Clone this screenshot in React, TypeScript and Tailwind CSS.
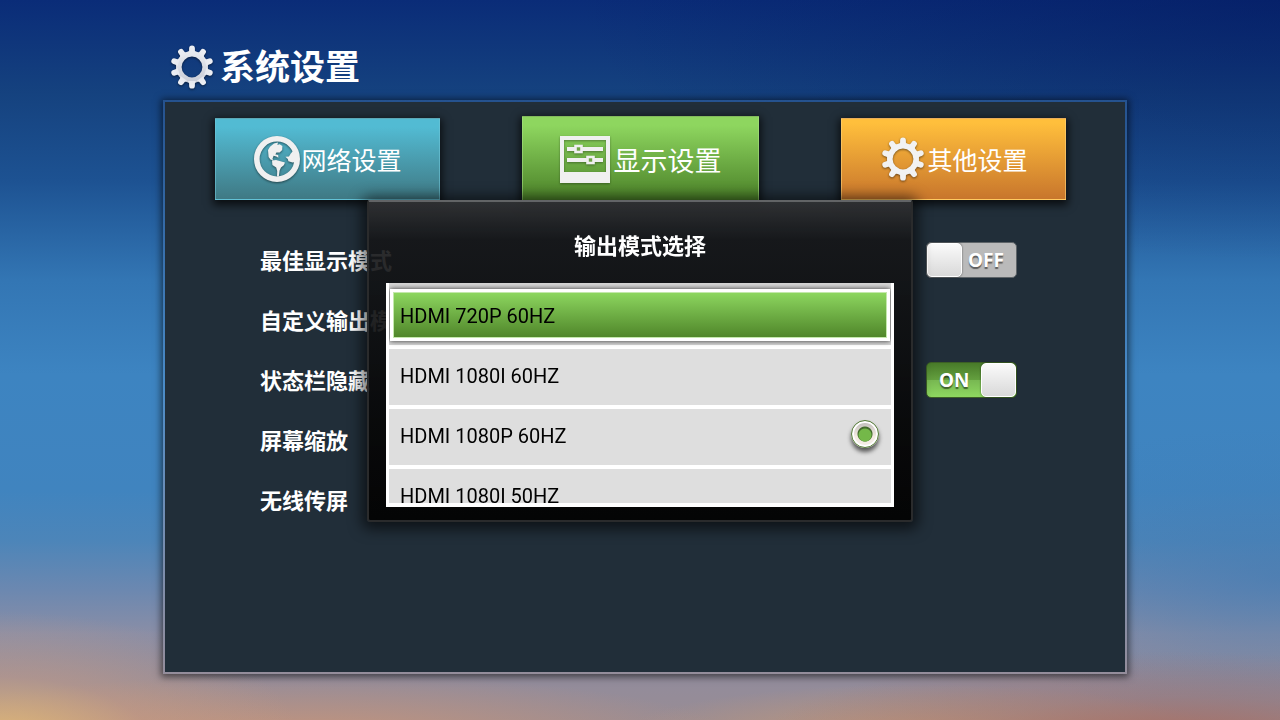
import { useState } from 'react'

interface Modo {
  id: string
  label: string
}

const MODES: Modo[] = [
  { id: '1080i60', label: 'HDMI 1080I 60HZ' },
  { id: '1080p60', label: 'HDMI 1080P 60HZ' },
  { id: '1080i50', label: 'HDMI 1080I 50HZ' },
]

const TEETH = [0, 36, 72, 108, 144, 180, 216, 252, 288, 324]

function GearIcon({ fill }: { fill: string }) {
  return (
    <svg viewBox="0 0 44 44" className="w-11 h-11 shrink-0 drop-shadow-[0_1px_1px_rgba(0,0,0,0.5)]" aria-hidden="true">
      <defs>
        <linearGradient id="gearSilver" gradientUnits="userSpaceOnUse" x1="0" y1="0" x2="0" y2="44">
          <stop offset="0" stopColor="#eef0f5" />
          <stop offset="1" stopColor="#c3c7d2" />
        </linearGradient>
      </defs>
      <circle cx="22" cy="22" r="13.2" fill="none" stroke={fill} strokeWidth="5.6" />
      {TEETH.map((a) => (
        <path key={a} d="M18 8 L19.1 5.6 V3.3 A2.9 2.9 0 0 1 24.9 3.3 V5.6 L26 8 Z" fill={fill} transform={`rotate(${a} 22 22)`} />
      ))}
    </svg>
  )
}

function GlobeIcon() {
  return (
    <svg viewBox="0 0 48 48" className="w-12 h-12 shrink-0 drop-shadow-[0_1px_1px_rgba(0,0,0,0.5)]" fill="#f0f0f0" aria-hidden="true">
      <circle cx="24" cy="24" r="20.2" fill="none" stroke="#f0f0f0" strokeWidth="5.6" />
      <path d="M15 15 L17 11.7 L21 8.6 L25 7.6 L24.4 10 L26.6 9.2 L29.4 11 L29.2 15 L26.6 17.4 L23.4 17.6 L22.4 19.6 L25.2 20 L25.4 22.8 L23.4 21.6 L20.6 20.8 L19.4 24 L20.6 25.4 L17.4 24.6 L15.6 22 Z" />
      <path d="M19 25.6 L23 25 L26.6 26 L32 27.4 L30.8 30.2 L28 32.4 L26.6 35.6 L25.8 41.6 L24 41.6 L24.2 36 L23.2 32.6 L19.4 30 Z" />
      <path d="M32.4 21.8 L36 21.4 L37.6 18.8 L40.4 15.4 L43 18 V27 L39.6 27.4 L35.4 26.2 L34.8 24 Z" />
    </svg>
  )
}

function DisplayIcon() {
  return (
    <svg viewBox="0 0 52 48" className="w-[52px] h-12 mr-0.5 shrink-0 drop-shadow-[0_1px_1px_rgba(0,0,0,0.35)]" fill="#f0f0f0" aria-hidden="true">
      <path fillRule="evenodd" d="M0 1 H50 V48 H0 Z M4 5 V37 H46 V5 Z" />
      <rect x="7" y="12" width="36" height="4" />
      <rect x="7" y="23" width="36" height="4" />
      <rect x="15.5" y="11" width="6" height="6" fill="#6da443" stroke="#f0f0f0" strokeWidth="2.6" />
      <rect x="27.5" y="22" width="6" height="6" fill="#6da443" stroke="#f0f0f0" strokeWidth="2.6" />
    </svg>
  )
}

function Toggle({ checked, onChange, id }: { checked: boolean; onChange: () => void; id: string }) {
  return (
    <label className="cursor-pointer font-['Noto_Sans'] text-[19px] leading-8 font-bold text-white [text-shadow:0_2px_1px_rgba(0,0,0,0.5)]">
      <input type="checkbox" role="switch" aria-labelledby={id} checked={checked} onChange={onChange} className="sr-only" />
      {checked ? (
        <span className="flex items-center justify-between w-[91px] h-9 rounded-[5px] border border-[#3c5f25] pl-3 bg-[linear-gradient(to_bottom,#487a29,#64a03f_50%,#78b852_51%,#8ed860)]">
          ON
          <span className="w-[35px] h-[34px] rounded-[5px] border border-white bg-linear-to-b from-[#fafafa] to-[#d9d9d9] shadow-[0_0_2px_rgba(0,0,0,0.6)]" />
        </span>
      ) : (
        <span className="flex items-center justify-between w-[91px] h-9 rounded-[5px] border border-[#5e6468] pr-3 bg-[#bababa]">
          <span className="w-[35px] h-[34px] rounded-[5px] border border-white bg-linear-to-b from-[#fafafa] to-[#d9d9d9] shadow-[0_0_2px_rgba(0,0,0,0.6)]" />
          OFF
        </span>
      )}
    </label>
  )
}

export default function App() {
  const [best, setBest] = useState(false)
  const [hideBar, setHideBar] = useState(true)
  const [mode, setMode] = useState('1080p60')

  return (
    <div className="min-h-screen flex flex-col pl-[163px] pr-[153px] pb-[46px] text-white font-[Roboto,'Noto_Sans_CJK_SC',sans-serif] bg-[radial-gradient(ellipse_300px_130px_at_0%_103%,rgba(232,190,116,0.9),rgba(214,160,124,0.4)_50%,transparent),radial-gradient(ellipse_420px_90px_at_92%_103%,rgba(170,104,90,0.85),rgba(160,110,105,0.4)_50%,transparent),radial-gradient(ellipse_300px_50px_at_72%_102%,rgba(205,155,115,0.8),transparent),radial-gradient(ellipse_420px_60px_at_24%_102%,rgba(205,150,120,0.8),transparent),radial-gradient(ellipse_330px_150px_at_100%_80%,rgba(66,122,178,0.6),rgba(66,122,178,0.2)_60%,transparent),radial-gradient(ellipse_700px_260px_at_100%_0%,rgba(2,22,92,0.5),transparent),linear-gradient(to_bottom,#0a2c78_0%,#15427f_13%,#1d5292_25%,#3376b4_39%,#3d84c1_52%,#4084bf_68%,#4c85b9_75%,#6c88b0_82%,#8a8ea6_88%,#928c9c_94%,#988c94_100%)]">
      <header className="h-[100px] pt-[34px] pl-[7px] flex items-center gap-[6px]">
        <GearIcon fill="url(#gearSilver)" />
        <h1 className="pt-[3px] text-[35px] leading-10 font-bold">系统设置</h1>
      </header>

      <div className="flex-1 flex p-0.5 bg-linear-to-b from-[#25528f] via-[#4a8cc8] to-[#948d9b] shadow-[0_1px_7px_2px_rgba(0,0,0,0.55)]">
        <main className="flex-1 bg-[#212e39]">
          <nav className="flex items-center justify-between pt-[14px] pl-[50px] pr-[59px] text-[25px] leading-9">
            <button type="button" className="flex items-center justify-center w-[225px] h-[82px] border border-[#6fc6d8]/60 bg-linear-to-b from-[#52bbd3] from-10% to-[#3f7984] shadow-[0_3px_8px_2px_rgba(0,0,0,0.7)]">
              <GlobeIcon />
              <span className="pt-[6px]">网络设置</span>
            </button>
            <button type="button" className="flex items-center justify-center w-[237px] h-[86px] border border-[#a6e080]/60 bg-linear-to-b from-[#8ed65f] from-10% to-[#4b8128] text-[27px] shadow-[0_3px_8px_2px_rgba(0,0,0,0.7)]">
              <DisplayIcon />
              <span className="pt-[6px]">显示设置</span>
            </button>
            <button type="button" className="flex items-center justify-center gap-0.5 w-[225px] h-[82px] pl-0.5 border border-[#ffd27a]/60 bg-linear-to-b from-[#ffbf3c] from-5% to-[#c8762c] shadow-[0_3px_8px_2px_rgba(0,0,0,0.7)]">
              <GearIcon fill="#f2f2f2" />
              <span className="pt-[6px]">其他设置</span>
            </button>
          </nav>

          <ul className="mt-7 pl-[95px] pr-[108px] text-[22px] font-bold">
            <li className="h-[60px] flex items-center justify-between">
              <span id="best" className="pt-0.5">最佳显示模式</span>
              <Toggle id="best" checked={best} onChange={() => setBest(!best)} />
            </li>
            <li className="h-[60px] flex items-center pt-0.5">自定义输出模式</li>
            <li className="h-[60px] flex items-center justify-between">
              <span id="hide" className="pt-0.5">状态栏隐藏</span>
              <Toggle id="hide" checked={hideBar} onChange={() => setHideBar(!hideBar)} />
            </li>
            <li className="h-[60px] flex items-center pt-0.5">屏幕缩放</li>
            <li className="h-[60px] flex items-center pt-0.5">无线传屏</li>
          </ul>
        </main>
      </div>

      {/* modal */}
      <div className="fixed inset-0 flex items-center justify-center pt-0.5">
        <section role="dialog" aria-labelledby="dlg" className="w-[546px] px-[17px] pb-[13px] rounded-[3px] border-2 border-[#2a2b2c] border-t-[#626466] bg-linear-to-b from-[#303133]/95 via-[#151618]/90 via-12% to-[#040404]/98 bg-clip-padding shadow-[0_2px_14px_5px_rgba(0,0,0,0.6)]">
          <h2 id="dlg" className="h-[81px] pt-2 flex items-center justify-center text-[22px] font-bold">输出模式选择</h2>
          <ul className="h-[224px] overflow-hidden border-x-[3px] border-b-4 border-white bg-white text-xl text-black">
            <li className="h-[62px] pt-[6px] px-px bg-[#d6d6d6]">
              <label className="flex items-center h-[52px] border-[3px] border-white pt-0.5 pl-[7px] bg-linear-to-b from-[#8ed860] to-[#4f8529] shadow-[0_0_5px_rgba(0,0,0,0.8),inset_0_0_0_1px_#c4e8ac]">
                <span className="flex-1">HDMI 720P 60HZ</span>
                <input type="radio" name="mode" checked={mode === '720p60'} onChange={() => setMode('720p60')} className="appearance-none size-7" />
              </label>
            </li>
            {MODES.map((m) => (
              <li key={m.id} className="mt-1">
                <label className="flex items-center h-14 pl-[11px] pr-3 pb-1 bg-[#dedede]">
                  <span className="flex-1 pt-0.5">{m.label}</span>
                  <input
                    type="radio"
                    name="mode"
                    checked={mode === m.id}
                    onChange={() => setMode(m.id)}
                    className="appearance-none size-7 mb-0.5 rounded-full checked:border checked:border-[#567d38] checked:bg-[radial-gradient(circle_at_50%_54%,#74b849_0_6px,transparent_7px),radial-gradient(circle_at_50%_50%,#436a2c_0_7px,transparent_8px),linear-gradient(to_bottom,#bdbab8,#f6ece4_60%,#f3ece6)] checked:shadow-[0_4px_4px_rgba(0,0,0,0.6),inset_0_0_0_2px_#fff]"
                  />
                </label>
              </li>
            ))}
          </ul>
        </section>
      </div>
    </div>
  )
}
